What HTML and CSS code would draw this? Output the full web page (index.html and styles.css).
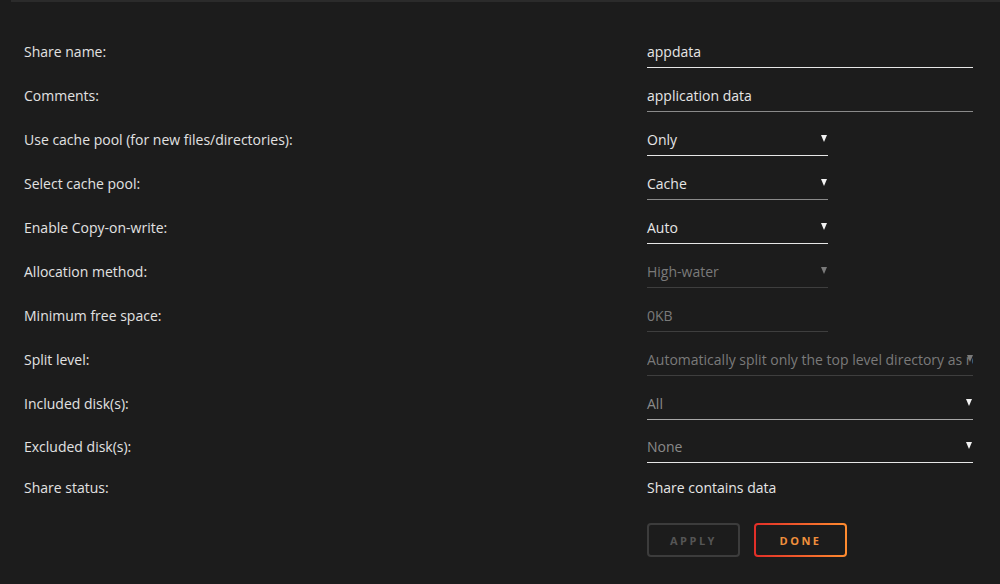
FILE: index.html
```html
<!DOCTYPE html>
<html lang="en-US">
<head>
<meta charset="utf-8">
<title>Share settings: appdata</title>
<link rel="stylesheet" href="styles.css">
</head>
<body>

<div class="topbar"></div>

<form class="share-form">
  <div class="row">
    <label class="label">Share name:</label>
    <div class="field wide bright">appdata</div>
  </div>
  <div class="row">
    <label class="label">Comments:</label>
    <div class="field wide mid">application data</div>
  </div>
  <div class="row">
    <label class="label">Use cache pool (for new files/directories):</label>
    <div class="field narrow bright select">Only</div>
  </div>
  <div class="row">
    <label class="label">Select cache pool:</label>
    <div class="field narrow mid select">Cache</div>
  </div>
  <div class="row">
    <label class="label">Enable Copy-on-write:</label>
    <div class="field narrow bright select">Auto</div>
  </div>
  <div class="row">
    <label class="label">Allocation method:</label>
    <div class="field narrow off select">High-water</div>
  </div>
  <div class="row">
    <label class="label">Minimum free space:</label>
    <div class="field narrow off">0KB</div>
  </div>
  <div class="row">
    <label class="label">Split level:</label>
    <div class="field wide off select clip">Automatically split only the top level directory as required</div>
  </div>
  <div class="row">
    <label class="label">Included disk(s):</label>
    <div class="field wide dim-mid select">All</div>
  </div>
  <div class="row short">
    <label class="label">Excluded disk(s):</label>
    <div class="field wide dim-bright select">None</div>
  </div>
  <div class="row last">
    <label class="label">Share status:</label>
    <div class="status">Share contains data</div>
  </div>

  <div class="buttons">
    <button type="button" class="btn apply" disabled>APPLY</button>
    <button type="button" class="btn done">DONE</button>
  </div>
</form>

</body>
</html>
```

FILE: styles.css
```css
html, body { margin: 0; height: 100%; }

body {
  background: #1c1c1c;
  color: #e2e2e2;
  font-family: "Open Sans", "Noto Sans", sans-serif;
  font-size: 14px;
}

.topbar { margin-left: 11px; height: 2px; background: #2b2b2b; }

.share-form { padding: 27px 0 0 24px; }

.row { display: flex; align-items: center; height: 44px; }
.row.short { height: 42px; }
.row.last { height: 40px; }

.label { width: 623px; flex: none; color: #e2e2e2; }

.field {
  position: relative;
  box-sizing: border-box;
  line-height: 22px;
  padding: 6px 0 4px;
  border-bottom: 1px solid #e6e6e6;
  white-space: nowrap;
}
.field.wide { width: 326px; }
.field.narrow { width: 181px; }

.field.bright { color: #e6e6e6; border-bottom-color: #e6e6e6; }
.field.mid { color: #e6e6e6; border-bottom-color: #8a8a8a; }
.field.off { color: #7a7a7a; border-bottom-color: #3e3e3e; }
.field.dim-mid { color: #8a8a8a; border-bottom-color: #a8a8a8; }
.field.dim-bright { color: #8a8a8a; border-bottom-color: #e6e6e6; }

.field.select { padding-right: 10px; }
.field.select::after {
  content: "";
  position: absolute;
  right: 1px;
  top: 12px;
  border-left: 3.5px solid transparent;
  border-right: 3.5px solid transparent;
  border-top: 7px solid #f2f2f2;
}
.field.off.select::after { border-top-color: #7a7a7a; }
.field.clip { overflow: hidden; text-overflow: clip; }
.field.clip::after { border-top-color: #d0d0d0; right: 0; }

.status { color: #e6e6e6; }

.buttons { display: flex; gap: 14px; margin: 16px 0 0 623px; }

.btn {
  box-sizing: border-box;
  width: 93px;
  height: 34px;
  font-family: inherit;
  font-size: 11px;
  font-weight: bold;
  letter-spacing: 2.5px;
  background: #1c1c1c;
  border-radius: 4px;
  cursor: pointer;
}
.btn.apply { color: #555; border: 2px solid #3c3c3c; }
.btn.done {
  color: #f0903c;
  border: 2px solid transparent;
  background:
    linear-gradient(#1c1c1c, #1c1c1c) padding-box,
    linear-gradient(90deg, #e22e28, #ff8c2f) border-box;
}
```
